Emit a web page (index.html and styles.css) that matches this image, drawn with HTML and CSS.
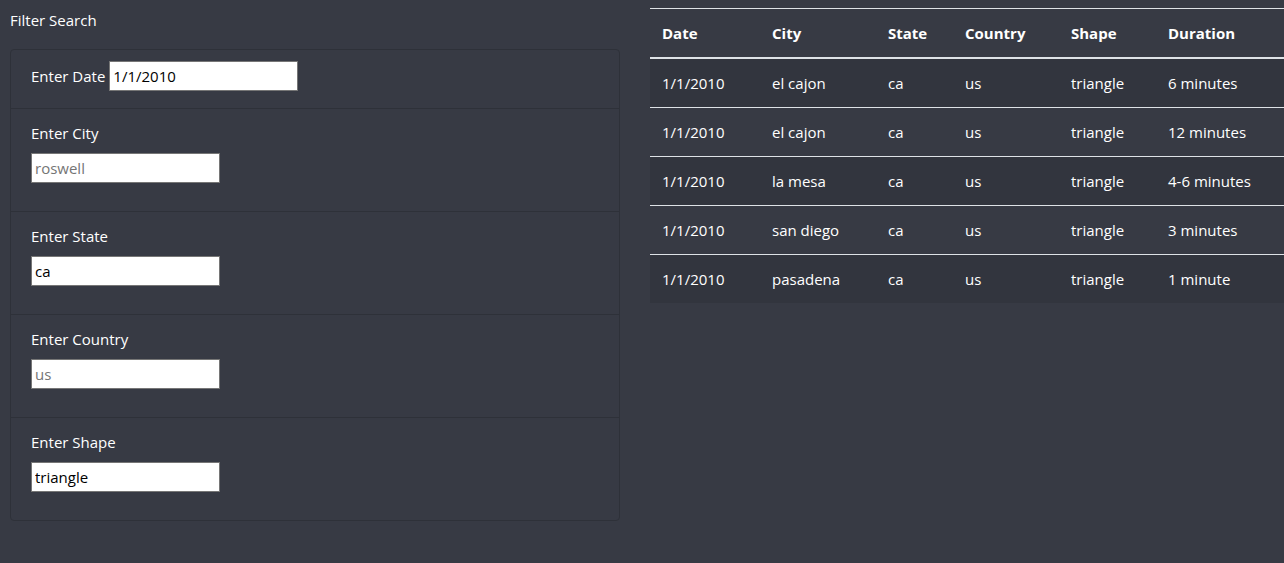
FILE: index.html
```html
<!DOCTYPE html>
<html>
<head>
<meta charset="utf-8">
<link rel="stylesheet" href="styles.css">
</head>
<body>
<div class="page">
  <div class="left">
    <div class="title">Filter Search</div>
    <ul class="filters">
      <li class="item item-inline">
        <label class="lbl-inline">Enter Date</label><input class="field" type="text" value="1/1/2010">
      </li>
      <li class="item">
        <label class="lbl">Enter City</label>
        <input class="field" type="text" placeholder="roswell">
      </li>
      <li class="item">
        <label class="lbl">Enter State</label>
        <input class="field" type="text" value="ca">
      </li>
      <li class="item">
        <label class="lbl">Enter Country</label>
        <input class="field" type="text" placeholder="us">
      </li>
      <li class="item">
        <label class="lbl">Enter Shape</label>
        <input class="field" type="text" value="triangle">
      </li>
    </ul>
  </div>
  <div class="right">
    <table class="ufo">
      <thead>
        <tr><th class="c1">Date</th><th class="c2">City</th><th class="c3">State</th><th class="c4">Country</th><th class="c5">Shape</th><th class="c6">Duration</th></tr>
      </thead>
      <tbody>
        <tr><td>1/1/2010</td><td>el cajon</td><td>ca</td><td>us</td><td>triangle</td><td>6 minutes</td></tr>
        <tr><td>1/1/2010</td><td>el cajon</td><td>ca</td><td>us</td><td>triangle</td><td>12 minutes</td></tr>
        <tr><td>1/1/2010</td><td>la mesa</td><td>ca</td><td>us</td><td>triangle</td><td>4-6 minutes</td></tr>
        <tr><td>1/1/2010</td><td>san diego</td><td>ca</td><td>us</td><td>triangle</td><td>3 minutes</td></tr>
        <tr><td>1/1/2010</td><td>pasadena</td><td>ca</td><td>us</td><td>triangle</td><td>1 minute</td></tr>
      </tbody>
    </table>
  </div>
</div>
</body>
</html>
```
FILE: styles.css
```css
html, body {
  margin: 0;
  padding: 0;
  background: #373a44;
  overflow: hidden;
}
body {
  font-family: "Open Sans", "Noto Sans", sans-serif;
  font-size: 15px;
  color: #ffffff;
  height: 563px;
}
.page {
  display: flex;
  gap: 30px;
  padding: 8px 0 0 10px;
}
.left {
  width: 610px;
  flex: none;
}
.title {
  height: 24px;
  line-height: 24px;
  font-size: 15px;
  margin-bottom: 17px;
}
.filters {
  list-style: none;
  margin: 0;
  padding: 0;
  border: 1px solid #2e3139;
  border-radius: 4px;
}
.item {
  padding: 12px 20px 28px 20px;
  border-top: 1px solid #2e3139;
  display: flex;
  flex-direction: column;
  align-items: flex-start;
}
.item:first-child {
  border-top: none;
}
.item-inline {
  flex-direction: row;
  align-items: center;
  padding: 11px 20px 17px 20px;
}
.lbl {
  display: block;
  line-height: 24px;
  margin-bottom: 8px;
}
.lbl-inline {
  line-height: 24px;
  margin-right: 4px;
}
.field {
  box-sizing: border-box;
  width: 189px;
  height: 30px;
  margin: 0;
  padding: 0 3px;
  border: 1px solid #767676;
  background: #ffffff;
  color: #000000;
  font-family: "Open Sans", "Noto Sans", sans-serif;
  font-size: 15px;
  border-radius: 0;
  outline: none;
}
.field::placeholder {
  color: #757575;
}
.right {
  flex: 1;
  min-width: 0;
}
.ufo {
  border-collapse: collapse;
  width: 660px;
  table-layout: fixed;
  font-size: 15px;
}
.ufo th, .ufo td {
  text-align: left;
  padding: 12px;
  height: 24px;
  line-height: 24px;
  border-top: 1px solid #dee2e6;
  white-space: nowrap;
}
.ufo th {
  font-weight: 700;
  border-bottom: 2px solid #dee2e6;
}
.ufo tbody tr:first-child td {
  border-top: none;
}
.ufo tbody tr:nth-child(odd) {
  background: #32353e;
}
.c1 { width: 86px; }
.c2 { width: 92px; }
.c3 { width: 53px; }
.c4 { width: 82px; }
.c5 { width: 73px; }
.c6 { width: auto; }
```
